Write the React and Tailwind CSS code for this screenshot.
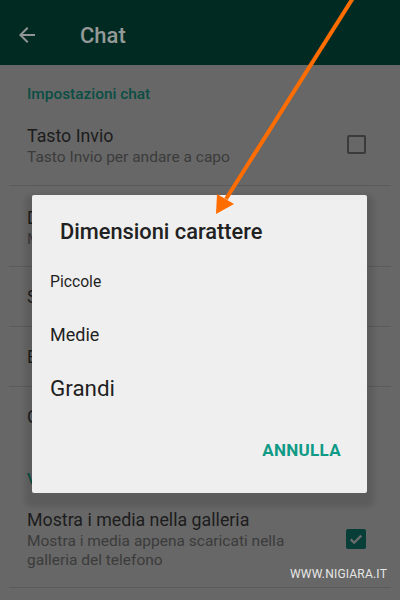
import React from 'react';

const font = { fontFamily: 'Roboto, "Noto Sans", Arial, sans-serif' };

function Row({ title, subtitle, className = '', checkbox }) {
  return (
    <div className={`relative mx-[9px] border-b border-[#5b5b5b] pl-[18px] pr-[24px] ${className}`}>
      <div className="text-[17.8px] leading-[22px] text-[#1c1c1c]">{title}</div>
      {subtitle && (
        <div className="mt-[1px] w-[290px] text-[15.5px] leading-[19px] text-[#3b3b3b]">{subtitle}</div>
      )}
      {checkbox}
    </div>
  );
}

export default function App() {
  return (
    <div className="relative h-[600px] w-[400px] overflow-hidden bg-[#676767]" style={font}>
      {/* toolbar */}
      <div className="flex h-[65px] items-center bg-[#012b22] pt-[5px]">
        <svg className="ml-[15px] h-[24px] w-[24px]" viewBox="0 0 24 24" fill="#8f9592">
          <path d="M20 11H7.83l5.59-5.59L12 4l-8 8 8 8 1.41-1.41L7.83 13H20v-2z" />
        </svg>
        <span className="ml-[41px] text-[22px] font-medium text-[#959a98]">Chat</span>
      </div>

      {/* settings list */}
      <div className="h-[50px] pl-[27px] pt-[20px] text-[15.4px] font-medium leading-[18px] text-[#0b4e44]">
        Impostazioni chat
      </div>
      <Row
        title="Tasto Invio"
        subtitle="Tasto Invio per andare a capo"
        className="h-[71px] pt-[10px]"
        checkbox={
          <div className="absolute right-[25px] top-[20px] h-[19px] w-[19px] rounded-[2px] border-2 border-[#3a3a3a]" />
        }
      />
      <Row title="Dimensioni carattere" subtitle="Medie" className="h-[81px] pt-[21px]" />
      <Row title="Sfondo" className="h-[60px] pt-[19px]" />
      <Row title="Backup delle chat" className="h-[60px] pt-[19px]" />
      <div className="h-[60px] pl-[27px] pt-[19px] text-[17.8px] leading-[22px] text-[#1c1c1c]">Cronologia chat</div>
      <div className="h-[52px] pl-[27px] pt-[23px] text-[15.4px] font-medium leading-[18px] text-[#0b4e44]">
        Visibilità media
      </div>
      <Row
        title="Mostra i media nella galleria"
        subtitle="Mostra i media appena scaricati nella galleria del telefono"
        className="h-[89px] pt-[10px]"
        checkbox={
          <div className="absolute right-[25px] top-[30px] flex h-[20px] w-[20px] items-center justify-center rounded-[2px] bg-[#073f38]">
            <svg viewBox="0 0 24 24" className="h-[18px] w-[18px]" fill="none" stroke="#6d6d6d" strokeWidth="3">
              <path d="M5 12.5l4.5 4.5L19 7.5" />
            </svg>
          </div>
        }
      />

      <div className="absolute right-[13px] top-[565px] text-[12px] tracking-[0.2px] text-[#e6e6e6]">WWW.NIGIARA.IT</div>

      {/* dialog */}
      <div className="absolute left-[32px] top-[195px] h-[298px] w-[335px] rounded-[2px] bg-[#efefef] shadow-[0_7px_4px_7px_rgba(0,0,0,0.1)]">
        <div className="pl-[28px] pt-[23px] text-[21.8px] font-medium leading-[28px] text-[#212121]">Dimensioni carattere</div>
        <div className="pl-[18px]">
          <div className="mt-[26px] text-[15.7px] leading-[20px] text-[#1f1f1f]">Piccole</div>
          <div className="mt-[32px] text-[18px] leading-[22px] text-[#1f1f1f]">Medie</div>
          <div className="mt-[27px] text-[22.4px] leading-[30px] text-[#1f1f1f]">Grandi</div>
        </div>
        <div className="mt-[37px] pr-[26px] text-right text-[17px] font-bold leading-[20px] tracking-[0.3px] text-[#0f9a86]">
          ANNULLA
        </div>
      </div>

      {/* annotation arrow */}
      <svg className="pointer-events-none absolute left-0 top-0 h-[600px] w-[400px]" viewBox="0 0 400 600">
        <line x1="353" y1="-2" x2="226" y2="199" stroke="#ff6d00" strokeWidth="4" />
        <polygon points="216,214 217,194 234,204" fill="#ff6d00" />
      </svg>
    </div>
  );
}
